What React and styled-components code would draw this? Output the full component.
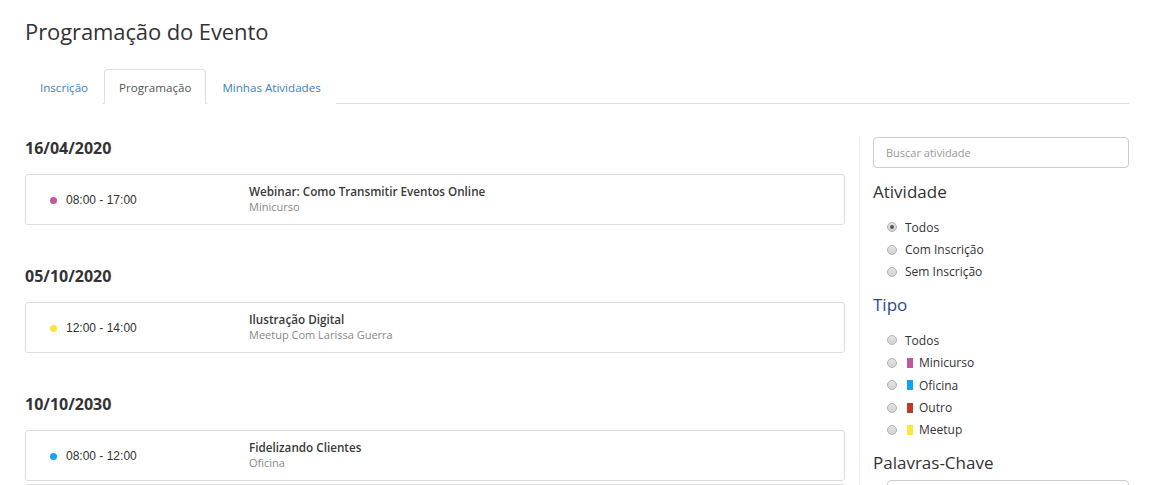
import React from "react";
import styled, { createGlobalStyle } from "styled-components";

const GlobalStyle = createGlobalStyle`
  html, body {
    margin: 0;
    padding: 0;
    background: #fff;
    font-family: "Open Sans", "Liberation Sans", sans-serif;
    color: #333;
    overflow: hidden;
  }
  * { box-sizing: border-box; }
`;

const Page = styled.div`
  width: 1156px;
  padding: 0 27px 0 25px;
`;

const PageTitle = styled.h1`
  margin: 0;
  padding-top: 16px;
  font-size: 22px;
  font-weight: 400;
  line-height: 30px;
  color: #333;
  letter-spacing: -0.1px;
`;

const Tabs = styled.ul`
  display: flex;
  list-style: none;
  margin: 23px 0 0;
  padding: 0;
  border-bottom: 1px solid #ddd;
`;

const Tab = styled.li`
  margin: 0 1px -1px 0;
  padding: 9px 14px 0;
  height: 35px;
  font-size: 11.6px;
  line-height: 18px;
  color: ${props => (props.active ? "#555" : "#3b7fc4")};
  background: #fff;
  border: 1px solid ${props => (props.active ? "#ddd" : "transparent")};
  border-bottom-color: ${props => (props.active ? "#fff" : "transparent")};
  border-radius: 4px 4px 0 0;
`;

const Body = styled.div`
  display: flex;
  margin-top: 33px;
`;

const Schedule = styled.div`
  width: 820px;
  flex-shrink: 0;
`;

const DayTitle = styled.h2`
  margin: 0;
  padding-top: 1px;
  font-size: 16px;
  font-weight: 700;
  line-height: 20px;
  color: #333;
  height: 37px;
`;

const Day = styled.section`
  margin-bottom: 40px;
`;

const Card = styled.div`
  display: grid;
  grid-template-columns: 223px 1fr;
  align-items: center;
  height: 51px;
  border: 1px solid #ddd;
  border-radius: 3px;
  margin-bottom: 3px;
`;

const Time = styled.div`
  display: flex;
  align-items: center;
  padding-left: 24px;
  font-family: "Liberation Sans", Arial, sans-serif;
  font-size: 12px;
  color: #333;
  padding-top: 1px;
`;

const Dot = styled.span`
  width: 7px;
  height: 7px;
  border-radius: 50%;
  background: ${props => props.color};
  margin-right: 9px;
`;

const Info = styled.div`
  display: flex;
  flex-direction: column;
  padding-bottom: 1px;
`;

const ActivityName = styled.span`
  font-size: 11.7px;
  font-weight: 600;
  line-height: 16px;
  color: #3a3a3a;
`;

const ActivityType = styled.span`
  font-size: 11px;
  line-height: 16px;
  color: #888;
`;

const Divider = styled.div`
  width: 1px;
  background: #eee;
  margin: 0 13px 0 14px;
  align-self: stretch;
  height: 360px;
`;

const Sidebar = styled.aside`
  width: 256px;
`;

const Search = styled.div`
  height: 31px;
  border: 1px solid #ccc;
  border-radius: 4px;
  padding: 0 12px;
  display: flex;
  align-items: center;
  font-size: 11px;
  color: #999;
`;

const FilterTitle = styled.h3`
  margin: 0;
  font-size: 17px;
  font-weight: 400;
  line-height: 24px;
  color: ${props => (props.accent ? "#2b4896" : "#333")};
  padding-top: ${props => props.top}px;
`;

const Options = styled.div`
  padding: 12px 0 0 14px;
  display: flex;
  flex-direction: column;
`;

const Option = styled.label`
  display: flex;
  align-items: center;
  height: 22.4px;
  font-size: 12px;
  color: #333;
`;

const Radio = styled.span`
  width: 10px;
  height: 10px;
  border-radius: 50%;
  border: 1px solid #b0b0b0;
  background: linear-gradient(#e4e4e4, #d2d2d2);
  margin-right: 8px;
  display: flex;
  align-items: center;
  justify-content: center;
  &::after {
    content: "";
    width: 4px;
    height: 4px;
    border-radius: 50%;
    background: #555;
    display: ${props => (props.checked ? "block" : "none")};
  }
`;

const Swatch = styled.span`
  width: 6px;
  height: 10px;
  background: ${props => props.color};
  margin: 0 6px 0 2px;
`;

const KeywordBox = styled.div`
  margin: 5px 0 0 14px;
  height: 30px;
  border: 1px solid #ccc;
  border-radius: 4px;
`;

const days = [
  {
    date: "16/04/2020",
    items: [{ time: "08:00 - 17:00", color: "#c2579b", name: "Webinar: Como Transmitir Eventos Online", type: "Minicurso" }],
  },
  {
    date: "05/10/2020",
    items: [{ time: "12:00 - 14:00", color: "#f7e43b", name: "Ilustração Digital", type: "Meetup Com Larissa Guerra" }],
  },
  {
    date: "10/10/2030",
    items: [
      { time: "08:00 - 12:00", color: "#1aa3ef", name: "Fidelizando Clientes", type: "Oficina" },
      { time: "", color: "transparent", name: "", type: "" },
    ],
  },
];

const tipos = [
  { label: "Minicurso", color: "#c2569a" },
  { label: "Oficina", color: "#12a3ee" },
  { label: "Outro", color: "#c0392b" },
  { label: "Meetup", color: "#fbe63a" },
];

export default function App() {
  return (
    <Page>
      <GlobalStyle />
      <PageTitle>Programação do Evento</PageTitle>
      <Tabs>
        <Tab>Inscrição</Tab>
        <Tab active>Programação</Tab>
        <Tab>Minhas Atividades</Tab>
      </Tabs>
      <Body>
        <Schedule>
          {days.map(day => (
            <Day key={day.date}>
              <DayTitle>{day.date}</DayTitle>
              {day.items.map((item, i) => (
                <Card key={i}>
                  <Time>
                    {item.time && <Dot color={item.color} />}
                    {item.time}
                  </Time>
                  <Info>
                    <ActivityName>{item.name}</ActivityName>
                    <ActivityType>{item.type}</ActivityType>
                  </Info>
                </Card>
              ))}
            </Day>
          ))}
        </Schedule>
        <Divider />
        <Sidebar>
          <Search>Buscar atividade</Search>
          <FilterTitle top={12}>Atividade</FilterTitle>
          <Options>
            <Option><Radio checked />Todos</Option>
            <Option><Radio />Com Inscrição</Option>
            <Option><Radio />Sem Inscrição</Option>
          </Options>
          <FilterTitle accent top={10}>Tipo</FilterTitle>
          <Options>
            <Option><Radio />Todos</Option>
            {tipos.map(t => (
              <Option key={t.label}>
                <Radio />
                <Swatch color={t.color} />
                {t.label}
              </Option>
            ))}
          </Options>
          <FilterTitle top={10}>Palavras-Chave</FilterTitle>
          <KeywordBox />
        </Sidebar>
      </Body>
    </Page>
  );
}
